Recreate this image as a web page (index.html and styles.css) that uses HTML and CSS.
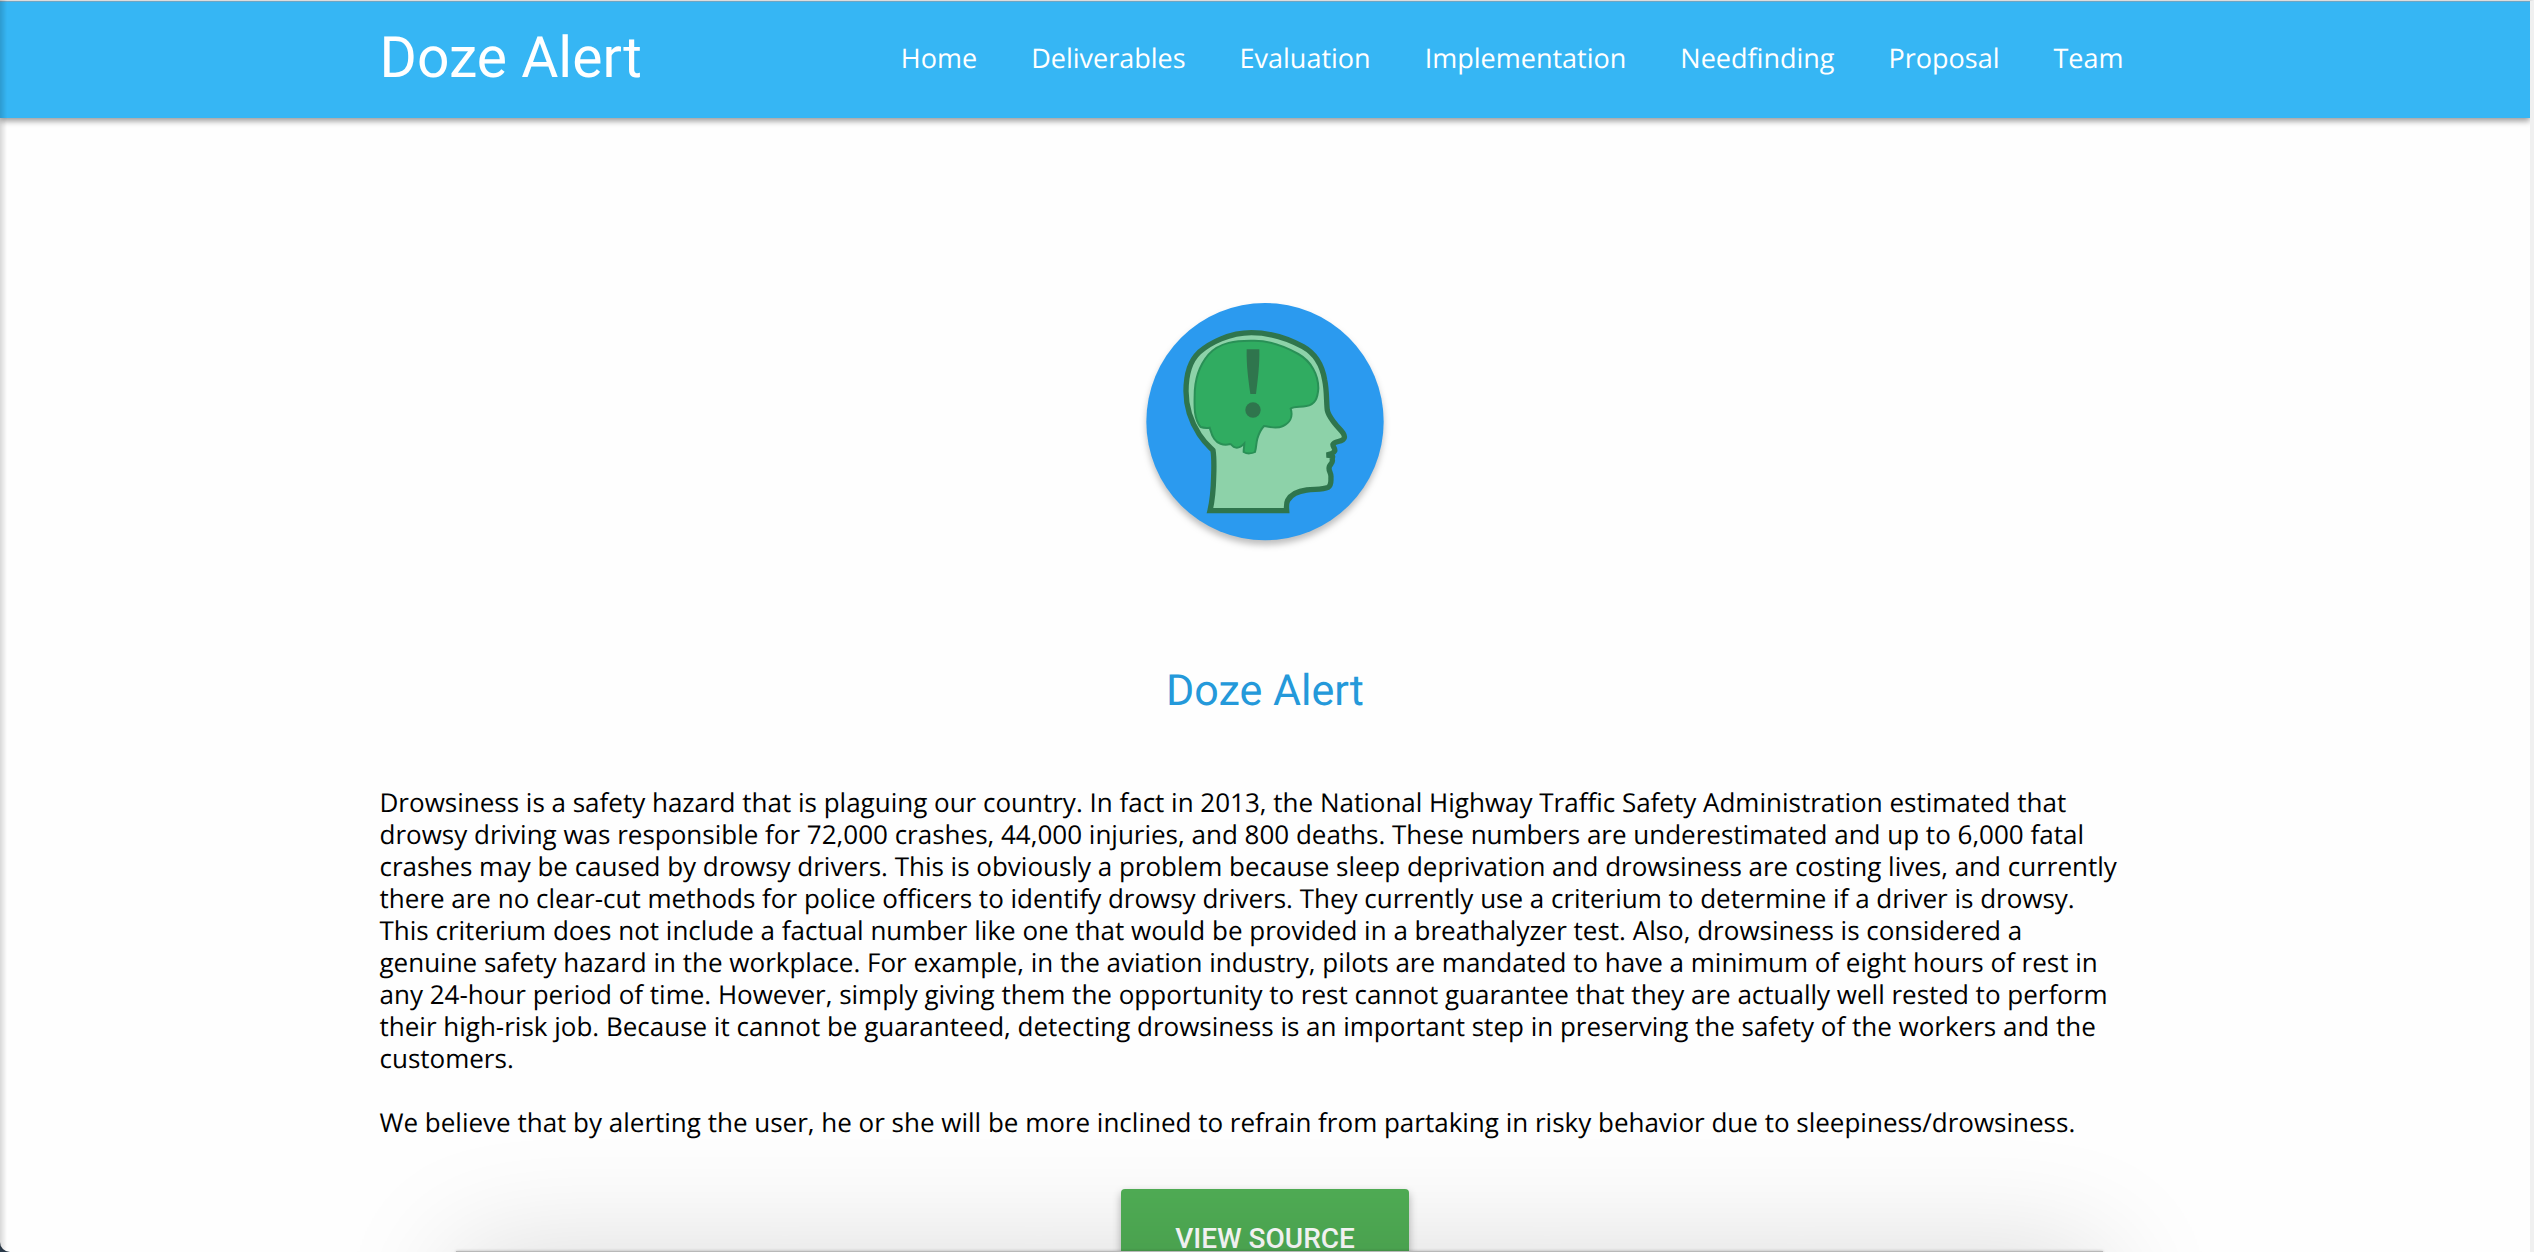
FILE: index.html
```html
<!DOCTYPE html>
<html lang="en">
<head>
<meta charset="utf-8">
<meta name="viewport" content="width=device-width, initial-scale=1">
<title>Doze Alert</title>
<link rel="stylesheet" href="styles.css">
</head>
<body>
<header class="navbar">
  <div class="container navbar-inner">
    <a class="brand" href="#">Doze Alert</a>
    <nav class="nav-links" aria-label="Main">
      <a href="#">Home</a>
      <a href="#">Deliverables</a>
      <a href="#">Evaluation</a>
      <a href="#">Implementation</a>
      <a href="#">Needfinding</a>
      <a href="#">Proposal</a>
      <a href="#">Team</a>
    </nav>
  </div>
</header>
<main class="container">
  <svg class="logo" viewBox="0 0 810 870" role="img" aria-label="Doze Alert logo">
    <circle class="logo-disc" cx="405" cy="425" r="356"/>
    <path class="logo-head" d="M240 692L470 692C469 678 468 670 473 661C484 642 505 633 530 630C556 627 579 629 594 622C606 615 602 602 603 590C603 577 594 572 598 560C600 553 609 549 607 540C605 533 611 530 606 527L590 525C599 523 610 520 614 513C617 505 607 500 609 493C614 482 639 487 643 473C646 460 627 447 615 431C604 416 595 407 592 391C589 372 591 331 584 300C576 252 555 220 519 200C469 173 410 158 364 158C299 158 240 188 207 217C176 246 168 292 168 334C168 382 184 427 208 464C227 493 242 503 249 511C253 535 252 560 251 590C250 633 249 654 240 692Z"/>
    <path class="logo-brain" d="M212 441C192 418 193 380 194 347C194 307 202 263 236 223C269 187 318 181 370 182C424 181 467 201 505 222C543 244 565 283 565 325C563 356 555 373 529 378C510 382 493 379 482 386C490 411 479 429 459 438C437 449 420 440 402 438C391 450 386 462 382 476C378 491 379 504 375 516C366 521 351 522 341 516C341 505 343 499 343 490C335 499 327 506 315 502C308 501 306 493 300 492C279 498 261 489 253 477C244 465 243 455 239 443C231 444 221 444 212 441Z"/>
    <path class="logo-mark" d="M350 208H388C389 256 384 296 378 342H361C355 298 349 257 350 208Z"/>
    <circle class="logo-mark" cx="369" cy="390" r="23"/>
  </svg>
  <h1 class="title">Doze Alert</h1>
  <p class="text">Drowsiness is a safety hazard that is plaguing our country. In fact in 2013, the National Highway Traffic Safety Administration estimated that drowsy driving was responsible for 72,000 crashes, 44,000 injuries, and 800 deaths. These numbers are underestimated and up to 6,000 fatal crashes may be caused by drowsy drivers. This is obviously a problem because sleep deprivation and drowsiness are costing lives, and currently there are no clear-cut methods for police officers to identify drowsy drivers. They currently use a criterium to determine if a driver is drowsy. This criterium does not include a factual number like one that would be provided in a breathalyzer test. Also, drowsiness is considered a genuine safety hazard in the workplace. For example, in the aviation industry, pilots are mandated to have a minimum of eight hours of rest in any 24-hour period of time. However, simply giving them the opportunity to rest cannot guarantee that they are actually well rested to perform their high-risk job. Because it cannot be guaranteed, detecting drowsiness is an important step in preserving the safety of the workers and the customers.</p>
  <p class="text">We believe that by alerting the user, he or she will be more inclined to refrain from partaking in risky behavior due to sleepiness/drowsiness.</p>
  <button class="button" type="button">VIEW SOURCE</button>
</main>
<div class="window-frame"></div>
<div class="dock-shadow"></div>
</body>
</html>
```
FILE: styles.css
```css
* {
  box-sizing: border-box;
}

html {
  height: 100%;
  overflow: hidden;
  background: #2b3a4a;
}

body {
  height: 100%;
  margin: 0;
  overflow: hidden;
  border-top: 1px solid #dcdcdc;
  border-right: 4px solid #f0f0f0;
  border-bottom-left-radius: 10px;
  background: #fefefe;
  color: #000;
  font-family: "Open Sans", sans-serif;
  font-size: 26px;
  line-height: 32px;
  text-rendering: geometricPrecision;
}

.container {
  width: 70%;
  margin: 0 auto;
}

.navbar {
  border-top: 1px solid #6fa5c2;
  background: #36b6f4;
  box-shadow: 0 3px 6px rgba(0, 0, 0, 0.4);
}

.navbar-inner {
  display: flex;
  align-items: center;
  justify-content: space-between;
  height: 116px;
  padding-bottom: 4px;
}

.navbar a {
  color: #fff;
  text-decoration: none;
}

.brand {
  font-family: Roboto, sans-serif;
  font-size: 57px;
  line-height: 64px;
}

.nav-links {
  display: flex;
}

.nav-links a {
  padding: 0 27px;
  font-size: 27px;
}

main.container {
  display: flex;
  flex-direction: column;
  align-items: center;
}

.logo {
  width: 270px;
  height: 290px;
  margin-top: 162px;
}

.logo-disc {
  fill: #2b9aef;
  filter: drop-shadow(0 14px 10px rgba(0, 0, 0, 0.25));
}

.logo-head {
  fill: #8dd2a9;
  stroke: #2f754d;
  stroke-width: 16;
}

.logo-brain {
  fill: #30ac61;
  stroke: #299056;
  stroke-width: 6;
}

.logo-mark {
  fill: #2f754d;
}

.title {
  margin: 96px 0 70px;
  color: #2499da;
  font-family: Roboto, sans-serif;
  font-size: 43px;
  font-weight: 400;
  line-height: 50px;
}

.text {
  width: 100%;
  margin: 0 0 32px;
  padding-right: 28px;
}

.button {
  flex: none;
  height: 98px;
  margin-top: 19px;
  padding: 0 54px;
  border: 0;
  border-radius: 4px;
  background: #50ae55;
  box-shadow: 0 4px 8px rgba(0, 0, 0, 0.3);
  color: #fff;
  font-family: Roboto, sans-serif;
  font-size: 28px;
  font-weight: 500;
}

/* soft shade along the left side of the browser window */
.window-frame {
  position: fixed;
  inset: 0 auto 0 0;
  width: 7px;
  border-bottom-left-radius: 10px;
  background: linear-gradient(to right, rgba(0, 0, 0, 0.15), transparent);
}

/* shadow cast upward by the dock below the window */
.dock-shadow {
  position: fixed;
  top: calc(100% - 1px);
  left: 18%;
  right: 17%;
  height: 160px;
  background: #b8b8b8;
  box-shadow: 0 0 3px rgba(0, 0, 0, 0.25), 0 0 120px rgba(0, 0, 0, 0.15);
}
```
